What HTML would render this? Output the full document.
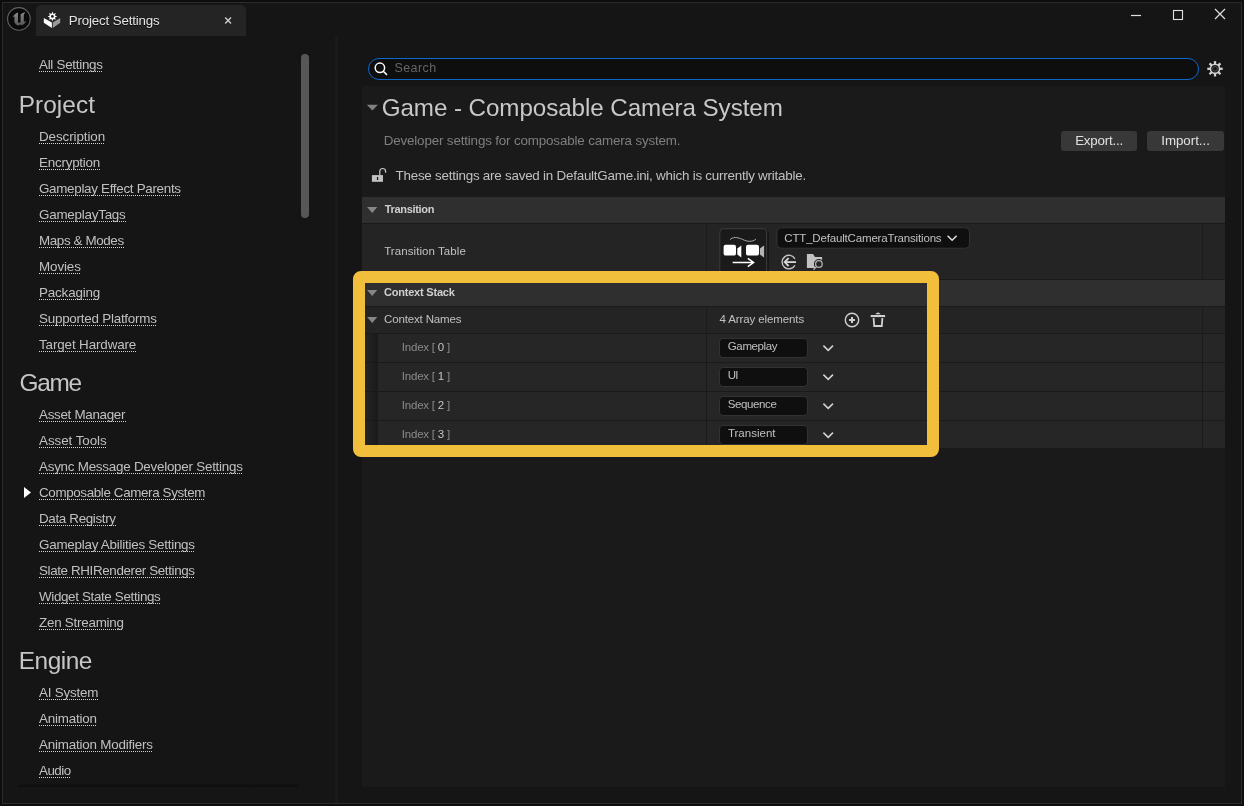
<!DOCTYPE html>
<html lang="en">
<head>
<meta charset="utf-8">
<title>Project Settings</title>
<style>
*{box-sizing:border-box;margin:0;padding:0}
html,body{width:1244px;height:806px;overflow:hidden;background:#0d0d0d}
body{font-family:"Liberation Sans",sans-serif;color:#c0c0c0;font-size:13px;position:relative}
#root{position:absolute;left:0;top:0;width:1244px;height:806px;will-change:transform}
#win{position:absolute;left:2px;top:2px;width:1240px;height:802px;background:#151515;border:1px solid #2b2b2b}
.t{position:absolute;white-space:nowrap;line-height:1}
svg{position:absolute;overflow:visible}
/* title bar */
#tab{position:absolute;left:36px;top:5px;width:210px;height:31px;background:#242424;border-radius:5px 5px 0 0}
.tab{font-size:13.3px;color:#e4e4e4;text-shadow:0 1px 0 #0a0a0a}
/* sidebar */
.nav{font-size:13.4px;color:#c0c0c0}
.ul{position:absolute;left:39px;height:1px;background:repeating-linear-gradient(90deg,#d4d4d4 0 1px,transparent 1px 2px)}
.h1{font-size:24.4px;color:#c6c6c6}
#sb{position:absolute;left:301px;top:54px;width:8px;height:164px;border-radius:4px;background:#575757}
#split{position:absolute;left:335px;top:36px;width:3px;height:767px;background:#1a1a1a}
#fade{position:absolute;left:19px;top:783px;width:280px;height:4px;background:linear-gradient(#151515,#0c0c0c)}
/* right */
#panel{position:absolute;left:362px;top:86px;width:863px;height:701px;background:#1a1a1a}
#search{position:absolute;left:367.6px;top:57.7px;width:831.6px;height:22.4px;border:1.4px solid #0c68cc;border-radius:11.2px;background:#0e0e0e}
.srch{font-size:12.5px;color:#666}
.ttl{font-size:24.2px;color:#c8c8c8}
.sub{font-size:13.4px;color:#c0c0c0}
.hdr{position:absolute;left:362px;width:863px;background:#2f2f2f}
.row{position:absolute;left:362px;width:863px;background:#242424}
.vl{position:absolute;width:1px;background:#1b1b1b}
.r2{background:#262626}
.ind{position:absolute;left:362px;width:16px;background:linear-gradient(90deg,#242424 25%,#1a1a1a)}
.btn{position:absolute;top:131px;height:20px;background:#383838;border-radius:3px}
.btnt{font-size:13.3px;color:#e0e0e0}
.inp{position:absolute;left:719px;width:89px;height:20px;background:#0f0f0f;border:1px solid #323232;border-radius:4px}
.lbl{font-size:11.5px;color:#c0c0c0}
.idx{font-size:11.5px;color:#8a8a8a}
.idx b{font-weight:normal;color:#c4c4c4}
.bold{font-size:11px;font-weight:bold;color:#d0d0d0}
#hl{position:absolute;left:353px;top:271px;width:586px;height:186px;border:12px solid #f1bf3b;border-radius:8px}
</style>
</head>
<body>
<div id="root">
<div id="win"></div>
<div id="tab"></div>
<div id="sb"></div>
<div id="split"></div>
<div id="fade"></div>

<div id="search"></div>
<div id="panel"></div>
<div class="btn" style="left:1061px;width:76px"></div>
<div class="btn" style="left:1147px;width:77px"></div>

<div class="hdr" style="top:197px;height:26px"></div>
<div class="row" style="top:224px;height:55px"></div>
<div class="hdr" style="top:280px;height:26px"></div>
<div class="row" style="top:307px;height:26px"></div>
<div class="row r2" style="top:334px;height:28px"></div>
<div class="row r2" style="top:363px;height:28px"></div>
<div class="row r2" style="top:392px;height:28px"></div>
<div class="row r2" style="top:421px;height:27px"></div>
<div class="ind" style="top:334px;height:28px"></div>
<div class="ind" style="top:363px;height:28px"></div>
<div class="ind" style="top:392px;height:28px"></div>
<div class="ind" style="top:421px;height:27px"></div>
<div class="vl" style="left:706px;top:224px;height:55px"></div>
<div class="vl" style="left:706px;top:307px;height:141px"></div>
<div class="vl" style="left:1202px;top:224px;height:55px"></div>
<div class="vl" style="left:1202px;top:307px;height:141px"></div>
<div class="inp" style="top:338px"></div>
<div class="inp" style="top:367px"></div>
<div class="inp" style="top:396px"></div>
<div class="inp" style="top:425px"></div>
<svg width="1244" height="806" viewBox="0 0 1244 806" style="left:0;top:0">
<!-- UE logo -->
<defs><linearGradient id="ug" x1="0" y1="0" x2="0" y2="1"><stop offset="0" stop-color="#8a8a8a"/><stop offset="1" stop-color="#565656"/></linearGradient></defs>
<circle cx="18.9" cy="18.9" r="11.3" fill="#0a0a0a" stroke="#646464" stroke-width="1.1"/>
<path d="M12.2 17.6 C13.6 15.2 15.4 13.4 17.4 12.4 L18 12.9 L18 22.2 C18.8 22.9 19.8 22.9 20.6 22.2 L20.6 14.6 C21.8 13.4 23.6 12.6 25.6 12.3 C24.6 13.2 24 14 23.8 15 L23.8 21.6 C24.6 21.8 25.4 21.3 26.2 20.4 C25.6 22.6 24 24.4 21.8 25.4 L20.4 24.2 L19 25.6 C16.6 25.2 15 24 14.4 22 L14.4 16.4 C13.8 16.4 13 16.9 12.2 17.6 Z" fill="url(#ug)"/>
<!-- tab icon -->
<path d="M43.8 18 L51.9 22.4 L51.9 27.9 L43.8 22.8 Z" fill="#fff"/>
<path d="M52.8 22.4 L60.2 18 L60.2 22.8 L52.8 27.9 Z" fill="#9a9a9a"/>
<g transform="translate(52.4 16.4)" fill="#fff">
<path d="M0 -4.8 L1 -2.5 L3.4 -3.4 L2.5 -1 L4.8 0 L2.5 1 L3.4 3.4 L1 2.5 L0 4.8 L-1 2.5 L-3.4 3.4 L-2.5 1 L-4.8 0 L-2.5 -1 L-3.4 -3.4 L-1 -2.5 Z"/>
<circle r="1.4" fill="#1a1a1a"/>
</g>
<!-- tab close -->
<path d="M225.2 17.6 L231 23.4 M231 17.6 L225.2 23.4" stroke="#cfcfcf" stroke-width="1.35" fill="none"/>
<!-- window controls -->
<path d="M1131 15.5 H1141" stroke="#e0e0e0" stroke-width="1.2"/>
<rect x="1173.5" y="10.5" width="9" height="9" fill="none" stroke="#e0e0e0" stroke-width="1.1"/>
<path d="M1215 9 L1225 19 M1225 9 L1215 19" stroke="#e0e0e0" stroke-width="1.2" fill="none"/>
<!-- sidebar selected marker -->
<path d="M24 487 L31 492.5 L24 498 Z" fill="#fff"/>
<!-- search magnifier -->
<circle cx="379.9" cy="67.8" r="4.7" fill="none" stroke="#fff" stroke-width="1.5"/>
<path d="M383.3 71.2 L387 74.9" stroke="#fff" stroke-width="1.5"/>
<!-- gear -->
<g transform="translate(1215 68.8)">
<g fill="#d2d2d2">
<circle r="5.3"/>
<rect x="-1.15" y="-7.7" width="2.3" height="15.4"/>
<rect x="-1.15" y="-7.7" width="2.3" height="15.4" transform="rotate(45)"/>
<rect x="-1.15" y="-7.7" width="2.3" height="15.4" transform="rotate(90)"/>
<rect x="-1.15" y="-7.7" width="2.3" height="15.4" transform="rotate(135)"/>
</g>
<circle r="3.8" fill="#151515"/>
<circle r="2.4" fill="none" stroke="#555" stroke-width="0.9"/>
</g>
<!-- title expander -->
<path d="M366.8 104.8 H378 L372.4 110.4 Z" fill="#808080"/>
<!-- lock -->
<rect x="371.9" y="175.1" width="11.1" height="6.7" fill="#c2c2c2"/>
<rect x="376.9" y="177" width="1.3" height="3" fill="#1a1a1a"/>
<path d="M379.8 175.4 V171.4 A2.9 2.9 0 0 1 385.6 171.4 V172.8" fill="none" stroke="#c8c8c8" stroke-width="1.2"/>
<!-- section expanders -->
<path d="M367.1 207 H377.3 L372.2 213 Z" fill="#868686"/>
<path d="M367.1 290 H377.3 L372.2 296 Z" fill="#868686"/>
<path d="M367.1 317 H377.3 L372.2 323 Z" fill="#868686"/>
<!-- thumbnail -->
<rect x="721" y="230" width="48" height="48" rx="4" fill="#171717"/>
<rect x="719.8" y="228.7" width="46.8" height="48" rx="3.5" fill="#1a1a1a" stroke="#3d3d3d" stroke-width="1"/>
<path d="M730 239.6 C732.5 237 737 236.8 742.5 239.4 C747.5 241.8 752 242.2 755.9 239.2" fill="none" stroke="#a8a8a8" stroke-width="1"/>
<rect x="723.6" y="244.8" width="12.4" height="10.8" rx="2" fill="#fff"/>
<path d="M737.3 248.5 L741.3 245.4 V257.5 L737.3 254.4 Z" fill="#fff"/>
<rect x="746" y="244.8" width="13" height="10.8" rx="2" fill="#fff"/>
<path d="M759.9 248.5 L764.1 245.4 V257.5 L759.9 254.4 Z" fill="#b4b4b4"/>
<path d="M732.6 262.5 H753.4 M747.8 258.4 L753.6 262.5 L747.8 266.7" fill="none" stroke="#fff" stroke-width="1.5"/>
<!-- combo -->
<rect x="777" y="227.8" width="192.5" height="20.4" rx="4" fill="#0f0f0f" stroke="#333" stroke-width="1"/>
<path d="M947.6 235.8 L952.1 240.3 L956.6 235.8" fill="none" stroke="#e0e0e0" stroke-width="1.5"/>
<!-- use selected (circle arrow) -->
<path d="M794.9 258.9 A6.8 6.8 0 1 0 794.9 265.3" fill="none" stroke="#c4c4c4" stroke-width="1.4"/>
<path d="M785.3 262.1 H796" stroke="#d8d8d8" stroke-width="1.8"/>
<path d="M788.6 258.2 L784.7 262.1 L788.6 266" fill="none" stroke="#d8d8d8" stroke-width="1.8"/>
<!-- folder search -->
<path d="M806.9 254.1 H813 L815 257 H822.1 V268.1 H806.9 Z" fill="#c2c2c2"/>
<circle cx="818.9" cy="264" r="5" fill="#242424"/>
<circle cx="818.9" cy="264" r="3.3" fill="#242424" stroke="#b0b0b0" stroke-width="1.3"/>
<path d="M816.5 266.6 L813.4 269.8" stroke="#b0b0b0" stroke-width="1.3"/>
<!-- plus circle -->
<circle cx="852" cy="320" r="6.7" fill="none" stroke="#d0d0d0" stroke-width="1.4"/>
<path d="M849 320 H855 M852 317 V323" stroke="#d0d0d0" stroke-width="2"/>
<!-- trash -->
<path d="M875.2 314.2 Q878 311 880.8 314.2 Z" fill="#d0d0d0"/>
<rect x="870.7" y="315" width="14.4" height="2.1" fill="#d0d0d0"/>
<path d="M873.6 318 L874.2 326 H881.8 L882.4 318" fill="none" stroke="#d0d0d0" stroke-width="1.8"/>
<!-- chevrons -->
<path d="M823.4 345.6 L828.2 350.4 L833 345.6" fill="none" stroke="#d4d4d4" stroke-width="1.5"/>
<path d="M823.4 374.6 L828.2 379.4 L833 374.6" fill="none" stroke="#d4d4d4" stroke-width="1.5"/>
<path d="M823.4 403.6 L828.2 408.4 L833 403.6" fill="none" stroke="#d4d4d4" stroke-width="1.5"/>
<path d="M823.4 432.6 L828.2 437.4 L833 432.6" fill="none" stroke="#d4d4d4" stroke-width="1.5"/>
</svg>

<div class="t tab" style="left:68.8px;top:14.0px;letter-spacing:-0.15px;">Project Settings</div>
<div class="t nav" style="left:39.0px;top:58.0px;letter-spacing:-0.28px;">All Settings</div>
<div class="ul" style="top:71px;width:64px"></div>
<div class="t nav" style="left:39.0px;top:130.0px;letter-spacing:-0.09px;">Description</div>
<div class="ul" style="top:143px;width:66px"></div>
<div class="t nav" style="left:39.0px;top:156.0px;letter-spacing:-0.22px;">Encryption</div>
<div class="ul" style="top:169px;width:61px"></div>
<div class="t nav" style="left:39.0px;top:182.0px;letter-spacing:-0.30px;">Gameplay Effect Parents</div>
<div class="ul" style="top:195px;width:141px"></div>
<div class="t nav" style="left:39.0px;top:208.0px;letter-spacing:-0.23px;">GameplayTags</div>
<div class="ul" style="top:221px;width:87px"></div>
<div class="t nav" style="left:39.0px;top:234.0px;letter-spacing:-0.38px;">Maps &amp; Modes</div>
<div class="ul" style="top:247px;width:85px"></div>
<div class="t nav" style="left:39.0px;top:260.0px;letter-spacing:-0.10px;">Movies</div>
<div class="ul" style="top:273px;width:42px"></div>
<div class="t nav" style="left:39.0px;top:286.0px;letter-spacing:-0.16px;">Packaging</div>
<div class="ul" style="top:299px;width:60px"></div>
<div class="t nav" style="left:39.0px;top:312.0px;letter-spacing:-0.23px;">Supported Platforms</div>
<div class="ul" style="top:325px;width:117px"></div>
<div class="t nav" style="left:39.0px;top:338.0px;letter-spacing:-0.12px;">Target Hardware</div>
<div class="ul" style="top:351px;width:97px"></div>
<div class="t nav" style="left:39.0px;top:408.0px;letter-spacing:-0.30px;">Asset Manager</div>
<div class="ul" style="top:421px;width:87px"></div>
<div class="t nav" style="left:39.0px;top:434.0px;letter-spacing:-0.05px;">Asset Tools</div>
<div class="ul" style="top:447px;width:67px"></div>
<div class="t nav" style="left:39.0px;top:460.0px;letter-spacing:-0.24px;">Async Message Developer Settings</div>
<div class="ul" style="top:473px;width:203px"></div>
<div class="t nav" style="left:39.0px;top:486.0px;letter-spacing:-0.37px;">Composable Camera System</div>
<div class="ul" style="top:499px;width:166px"></div>
<div class="t nav" style="left:39.0px;top:512.0px;letter-spacing:-0.34px;">Data Registry</div>
<div class="ul" style="top:525px;width:77px"></div>
<div class="t nav" style="left:39.0px;top:538.0px;letter-spacing:-0.24px;">Gameplay Abilities Settings</div>
<div class="ul" style="top:551px;width:156px"></div>
<div class="t nav" style="left:39.0px;top:564.0px;letter-spacing:-0.37px;">Slate RHIRenderer Settings</div>
<div class="ul" style="top:577px;width:156px"></div>
<div class="t nav" style="left:39.0px;top:590.0px;letter-spacing:-0.35px;">Widget State Settings</div>
<div class="ul" style="top:603px;width:122px"></div>
<div class="t nav" style="left:39.0px;top:616.0px;letter-spacing:-0.24px;">Zen Streaming</div>
<div class="ul" style="top:629px;width:84px"></div>
<div class="t nav" style="left:39.0px;top:686.0px;letter-spacing:-0.20px;">AI System</div>
<div class="ul" style="top:699px;width:59px"></div>
<div class="t nav" style="left:39.0px;top:712.0px;letter-spacing:-0.19px;">Animation</div>
<div class="ul" style="top:725px;width:57px"></div>
<div class="t nav" style="left:39.0px;top:738.0px;letter-spacing:-0.20px;">Animation Modifiers</div>
<div class="ul" style="top:751px;width:113px"></div>
<div class="t nav" style="left:39.0px;top:764.0px;letter-spacing:-0.53px;">Audio</div>
<div class="ul" style="top:777px;width:32px"></div>
<div class="t h1" style="left:18.8px;top:93.0px;letter-spacing:0.04px;">Project</div>
<div class="t h1" style="left:19.6px;top:371.0px;letter-spacing:-1.33px;">Game</div>
<div class="t h1" style="left:18.8px;top:649.0px;letter-spacing:-0.48px;">Engine</div>
<div class="t srch" style="left:394.4px;top:62.0px;letter-spacing:0.45px;">Search</div>
<div class="t ttl" style="left:381.7px;top:96.0px;letter-spacing:-0.07px;">Game - Composable Camera System</div>
<div class="t sub" style="left:383.7px;top:134.0px;letter-spacing:-0.16px;color:#7f7f7f">Developer settings for composable camera system.</div>
<div class="t sub" style="left:395.5px;top:169.0px;letter-spacing:-0.23px;">These settings are saved in DefaultGame.ini, which is currently writable.</div>
<div class="t btnt" style="left:1075.2px;top:134.0px;letter-spacing:-0.20px;">Export...</div>
<div class="t btnt" style="left:1161.2px;top:134.0px;">Import...</div>
<div class="t bold" style="left:384.8px;top:204.0px;letter-spacing:-0.33px;">Transition</div>
<div class="t lbl" style="left:384.2px;top:246.0px;letter-spacing:0.07px;">Transition Table</div>
<div class="t lbl" style="left:784.3px;top:233.0px;letter-spacing:-0.17px;">CTT_DefaultCameraTransitions</div>
<div class="t bold" style="left:383.9px;top:287.0px;letter-spacing:-0.20px;">Context Stack</div>
<div class="t lbl" style="left:384.1px;top:314.0px;letter-spacing:-0.16px;">Context Names</div>
<div class="t lbl" style="left:719.5px;top:314.0px;letter-spacing:-0.11px;">4 Array elements</div>
<div class="t idx" style="left:401.8px;top:342.0px;letter-spacing:-0.21px;">Index [ <b>0</b> ]</div>
<div class="t lbl" style="left:727.8px;top:341.0px;letter-spacing:-0.38px;">Gameplay</div>
<div class="t idx" style="left:401.8px;top:371.0px;letter-spacing:-0.21px;">Index [ <b>1</b> ]</div>
<div class="t lbl" style="left:727.8px;top:370.0px;letter-spacing:-0.79px;">UI</div>
<div class="t idx" style="left:401.8px;top:400.0px;letter-spacing:-0.21px;">Index [ <b>2</b> ]</div>
<div class="t lbl" style="left:727.8px;top:399.0px;letter-spacing:-0.39px;">Sequence</div>
<div class="t idx" style="left:401.8px;top:429.0px;letter-spacing:-0.21px;">Index [ <b>3</b> ]</div>
<div class="t lbl" style="left:727.9px;top:428.0px;letter-spacing:0.02px;">Transient</div>
<div id="hl"></div>
</div>
</body>
</html>
